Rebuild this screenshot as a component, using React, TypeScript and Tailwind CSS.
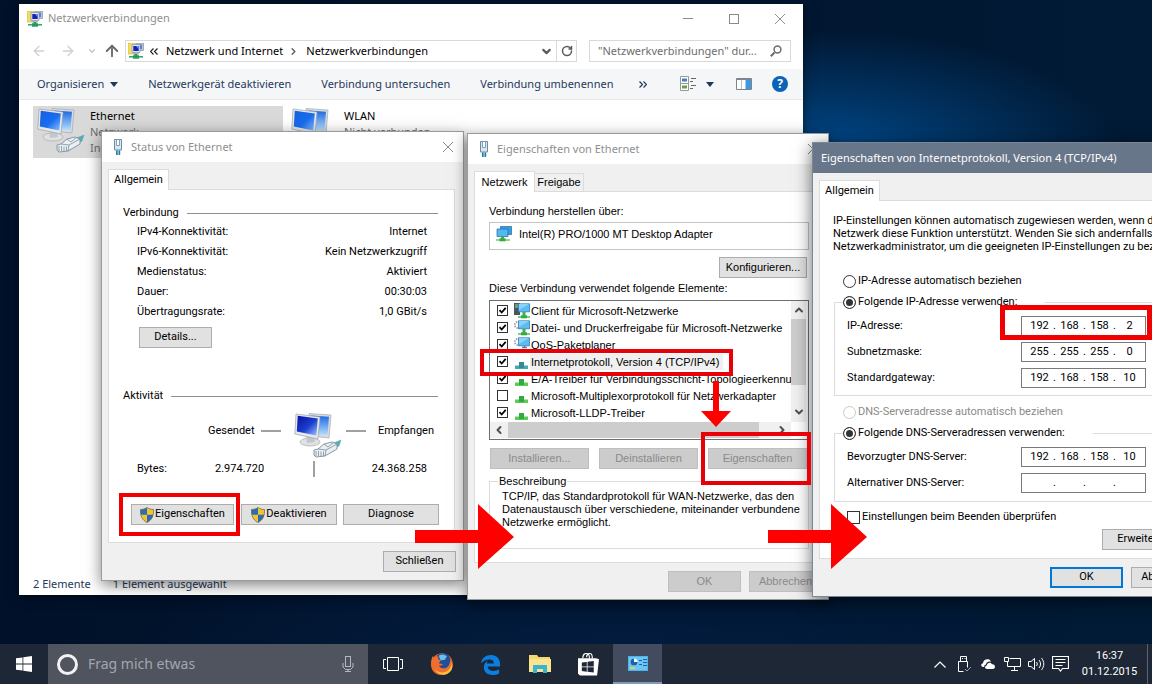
import { FC, ReactNode } from "react"
import { ArrowLeft, ArrowRight, ArrowUp, ChevronDown, ChevronLeft, ChevronRight, ChevronUp, RotateCw } from "lucide-react"

type IconProps = { className?: string }

/* ---------- icons ---------- */

const NetFolderIcon: FC<IconProps> = ({ className }) => (
  <svg viewBox="0 0 16 16" className={className}>
    <path d="M0 0h7v11H0z" fill="#f2dd62" stroke="#c9ae3a" strokeWidth=".6" />
    <path d="M8 0h7.500v7.500H8z" fill="#b9c3d6" stroke="#7c879b" strokeWidth=".6" />
    <path d="M9.500 1.500H14v4.500H9.500z" fill="#5d83d6" />
    <path d="M4 1.500h8v8H4z" fill="#dfe4ee" stroke="#78839a" strokeWidth=".6" />
    <path d="M5.300 3h5.400v5H5.300z" fill="#1322b8" />
    <path d="M8 3h2.700v3.500z" fill="#5f8cf0" />
    <path d="M5 10h6v1.300H5z" fill="#aab3c4" />
    <path d="M6.500 11h3v2h-3z" fill="#2f9e62" />
    <path d="M1 13h14v1.600H1z" fill="#2fae6a" />
    <path d="M5 12.300h6v3.400H5z" fill="#249a5b" />
  </svg>
)

const ComputersIcon: FC<IconProps & { dark?: boolean }> = ({ className, dark }) => (
  <svg viewBox="0 0 48 48" className={className}>
    <defs>
      <linearGradient id={dark ? "scrD" : "scrL"} x1="0" y1="0" x2="1" y2="1">
        <stop offset="0" stopColor={dark ? "#0a12a0" : "#1560dc"} />
        <stop offset=".55" stopColor={dark ? "#1a3fd0" : "#1a6df0"} />
        <stop offset="1" stopColor={dark ? "#a9c6ff" : "#8cc2ff"} />
      </linearGradient>
      <linearGradient id={dark ? "bckD" : "bckL"} x1="0" y1="0" x2="0" y2="1">
        <stop offset="0" stopColor="#1b66e0" />
        <stop offset="1" stopColor="#b4dcff" />
      </linearGradient>
    </defs>
    <path d="M15 .500l22 1.500-2 23-18-2z" fill="#d6dbe0" stroke="#a3a9b0" strokeWidth=".7" />
    <path d="M17 2.500l18 1.300L33.500 22 18 21z" fill={dark ? "url(#bckD)" : "url(#bckL)"} />
    <ellipse cx="16" cy="29" rx="10" ry="4" fill="#dfe1e3" stroke="#a9adb2" strokeWidth=".7" />
    <path d="M12 22l8 1 1 6-8 1z" fill="#c3c7cc" />
    <path d="M2 1l24 3-2 22L.800 21z" fill="#e6e9ec" stroke="#9da3aa" strokeWidth=".7" />
    <path d="M3.800 2.800l20 2.700L22.300 22.500 2.800 18.500z" fill={dark ? "url(#scrD)" : "url(#scrL)"} />
    <path d="M37 31l10-4-2 6-7 4z" fill="#4fb0c2" stroke="#7d949e" strokeWidth=".5" />
    <path d="M20 37l4-1 6-5 8-2 5 2v5L31 43l-9 1-2-2z" fill="#e9eff2" stroke="#7b909b" strokeWidth=".9" />
    <path d="M24 36l8 1 11-6M32 37l-1 6M22 38v5M24.500 38v5M27 38.500V43M29.500 38.500V43M30 31l4 3 5-4" stroke="#7b909b" strokeWidth=".8" fill="none" />
  </svg>
)

const PlugIcon: FC<IconProps> = ({ className }) => (
  <svg viewBox="0 0 10 16" className={className}>
    <path d="M1.500 .500h7v10.500h-7z" fill="#dbe6ef" stroke="#6b8ba6" />
    <path d="M3.500 .500h3v6h-3z" fill="#fff" stroke="#6b8ba6" strokeWidth=".8" />
    <path d="M3 11.500h1.700V16H3zM5.500 11.500h1.700V16H5.500z" fill="#1b7fa8" />
  </svg>
)

const ShieldIcon: FC<IconProps> = ({ className }) => (
  <svg viewBox="0 0 14 16" className={className}>
    <path d="M7 .500c2 1.500 4.300 2 6.500 2 .3 6-1.500 10.500-6.500 13C2 13 .2 8.500 .5 2.500 2.700 2.500 5 2 7 .500z" fill="#f4c430" />
    <path d="M7 .500v7.300H.800C.500 6 .4 4.200 .5 2.500 2.700 2.500 5 2 7 .500zM7 7.800h6.200c-.8 3.500-2.700 6-6.200 7.700z" fill="#2a6cb8" />
    <path d="M7 .500c2 1.500 4.300 2 6.500 2 .3 6-1.500 10.500-6.500 13C2 13 .2 8.500 .5 2.500 2.700 2.500 5 2 7 .500z" fill="none" stroke="#6c6a50" strokeWidth=".8" />
  </svg>
)

const AdapterIcon: FC<IconProps> = ({ className }) => (
  <svg viewBox="0 0 16 16" className={className}>
    <path d="M4.500 .500h11v8h-11z" fill="#3a9de0" stroke="#1c6aa8" strokeWidth=".7" />
    <path d="M1 3h11v7.500H1z" fill="#55b7f0" stroke="#1c6aa8" strokeWidth=".7" />
    <path d="M5 10.500h3v2.500H5z" fill="#3eb34a" />
    <path d="M0 13h14v2H0z" fill="#8fdc8a" />
    <path d="M3.500 12.300h6v3h-6z" fill="#36a844" />
  </svg>
)

const ClientIcon: FC<{ kind: string }> = ({ kind }) => (
  <svg viewBox="0 0 16 16" className="size-4 shrink-0">
    {kind === "client" && <path d="M0 0h6v12H0z" fill="#4b5560" />}
    {kind === "client" && <path d="M1 2h4M1 4h4" stroke="#9fd89f" />}
    {kind !== "client" && (
      <circle cx="4" cy="5" r="3.200" fill="none" stroke="#9aa4ad" strokeWidth="1.800" strokeDasharray="1.500 1" />
    )}
    <path d="M4.500 .800h11v8h-11z" fill="#5cbcf2" stroke="#2b7db8" strokeWidth=".8" />
    <path d="M5 1h10L5 7z" fill="#8ad3fa" />
    {kind !== "qos" ? (
      <>
        <path d="M8.500 9h3v4h-3z" fill="#3eb34a" />
        <path d="M4 13h12v2H4z" fill="#7fd07a" />
        <path d="M7 12.300h6v3H7z" fill="#36a844" />
      </>
    ) : (
      <path d="M8 10.500h5M10.500 9v2" stroke="#5f7c92" strokeWidth="1.500" />
    )}
  </svg>
)

const ProtocolIcon: FC<{ teal?: boolean }> = ({ teal }) => (
  <svg viewBox="0 0 16 16" className="size-4 shrink-0">
    <path d="M1 11.500h13V15H1z" fill={teal ? "#4aa8b0" : "#5fca5c"} />
    <path d="M5 8h5v6H5z" fill={teal ? "#2f8c92" : "#35a840"} />
  </svg>
)

const CloseIcon: FC<IconProps> = ({ className }) => (
  <svg viewBox="0 0 10 10" className={className}>
    <path d="M0 0l10 10M10 0L0 10" stroke="currentColor" fill="none" />
  </svg>
)

const Triangle: FC = () => (
  <svg viewBox="0 0 8 5" className="w-2 h-[5px]">
    <path d="M0 0h8L4 5z" fill="#1e395b" />
  </svg>
)

/* ---------- controls ---------- */

const PushButton: FC<{ children: ReactNode; className?: string; disabled?: boolean }> = ({
  children,
  className = "w-[73px]",
  disabled,
}) => (
  <button
    type="button"
    disabled={disabled}
    className={`h-[21px] shrink-0 flex items-center justify-center border whitespace-nowrap ${
      disabled ? "bg-[#cccccc] border-[#bfbfbf] text-[#8a8a8a]" : "bg-[#e1e1e1] border-[#adadad] text-black"
    } ${className}`}
  >
    {children}
  </button>
)

const TitleBar: FC<{ title: string }> = ({ title }) => (
  <div className="h-[30px] shrink-0 bg-white flex items-center pl-[11px] text-[11px] text-[#8f8f8f] font-['Noto_Sans',sans-serif]">
    <PlugIcon className="w-[10px] h-4" />
    <h2 className="ml-2">{title}</h2>
    <button type="button" aria-label="Schließen" className="ml-auto pr-[10px] text-[#8a8a8a]">
      <CloseIcon className="size-[10px]" />
    </button>
  </div>
)

const SectionTitle: FC<{ children: string }> = ({ children }) => (
  <div className="h-4 flex items-center gap-2">
    <h3>{children}</h3>
    <span className="flex-1 h-px bg-[#8f8f8f]" />
  </div>
)

/* ---------- explorer window ---------- */

const ExplorerWindow: FC = () => (
  <section className="absolute left-[19px] top-1 w-[784px] h-[591px] flex flex-col bg-white text-[11px] font-['Noto_Sans',sans-serif] shadow-[0_2px_10px_rgba(0,0,0,0.5)]">
    <div className="h-[29px] flex items-center pl-2 text-[#8f8f8f]">
      <NetFolderIcon className="size-4" />
      <h1 className="ml-[5px]">Netzwerkverbindungen</h1>
      <div className="ml-auto flex self-stretch">
        <button type="button" aria-label="Minimieren" className="w-[46px] flex items-center justify-center">
          <span className="w-[10px] h-px bg-[#8a8a8a]" />
        </button>
        <button type="button" aria-label="Maximieren" className="w-[46px] flex items-center justify-center">
          <span className="size-[10px] border border-[#8a8a8a]" />
        </button>
        <button type="button" aria-label="Schließen" className="w-[46px] flex items-center justify-center">
          <CloseIcon className="size-[10px]" />
        </button>
      </div>
    </div>

    <div className="h-9 flex items-center pl-[5px] pr-3 text-black">
      <button type="button" aria-label="Zurück" className="w-[29px] flex justify-center text-[#d0d0d0]">
        <ArrowLeft className="size-4" strokeWidth={2} />
      </button>
      <button type="button" aria-label="Vorwärts" className="w-[29px] flex justify-center text-[#d0d0d0]">
        <ArrowRight className="size-4" strokeWidth={2} />
      </button>
      <button type="button" aria-label="Verlauf" className="w-5 flex justify-center text-[#c4c4c4]">
        <ChevronDown className="size-[10px]" strokeWidth={3} />
      </button>
      <button type="button" aria-label="Nach oben" className="w-5 flex justify-center text-[#6a6a6a]">
        <ArrowUp className="size-[18px]" strokeWidth={2.5} />
      </button>
      <nav className="ml-[3px] flex-1 h-[22px] flex items-center border border-[#d9d9d9]">
        <NetFolderIcon className="ml-[2px] size-4" />
        <svg viewBox="0 0 8 7" className="ml-[6px] mr-2 w-2 h-[7px]">
          <path d="M3.500 .500l-3 3 3 3M7.500 .500l-3 3 3 3" fill="none" stroke="#222" strokeWidth="1.200" />
        </svg>
        <button type="button">Netzwerk und Internet</button>
        <ChevronRight className="ml-[5px] mr-[7px] size-[11px] text-[#5c5c5c]" strokeWidth={3} />
        <button type="button">Netzwerkverbindungen</button>
        <ChevronDown className="ml-auto mr-[3px] size-[13px] text-[#5c5c5c]" strokeWidth={4} />
        <button
          type="button"
          aria-label="Aktualisieren"
          className="w-5 self-stretch flex items-center justify-center border-l border-[#d9d9d9] text-[#5c5c5c]"
        >
          <RotateCw className="size-3" strokeWidth={3} />
        </button>
      </nav>
      <div className="ml-3 w-[202px] h-[22px] flex items-center border border-[#d9d9d9]">
        <input
          aria-label="Suchen"
          placeholder={'"Netzwerkverbindungen" dur...'}
          className="flex-1 min-w-0 pl-2 outline-none placeholder:text-[#6d6d6d]"
        />
        <svg viewBox="0 0 12 12" className="mr-2 size-3">
          <path d="M4.500 7.500L.800 11.200" stroke="#6d6d6d" strokeWidth="2" />
          <circle cx="7.500" cy="4.500" r="3.400" fill="none" stroke="#6d6d6d" strokeWidth="1.500" />
        </svg>
      </div>
    </div>

    <div className="h-[31px] flex items-center gap-[30px] pl-[18px] pr-[15px] bg-[#f5f6f7] border-b border-[#e4e6e8] text-[#1e395b]">
      <button type="button" className="flex items-center gap-[6px]">
        Organisieren
        <Triangle />
      </button>
      <button type="button">Netzwerkgerät deaktivieren</button>
      <button type="button">Verbindung untersuchen</button>
      <button type="button">Verbindung umbenennen</button>
      <button type="button" aria-label="Weitere Befehle" className="-ml-1">
        <svg viewBox="0 0 8 7" className="w-2 h-[7px]">
          <path d="M.500 .500l3 3-3 3M4.500 .500l3 3-3 3" fill="none" stroke="#1e395b" strokeWidth="1.200" />
        </svg>
      </button>
      <div className="ml-auto flex items-center">
        <button type="button" aria-label="Ansicht ändern" className="flex items-center gap-[10px]">
          <svg viewBox="0 0 16 16" className="size-4">
            <path d="M.500 .500h8v7h-8zM.500 7.500h8v7h-8z" fill="#fff" stroke="#9a9a8a" />
            <path d="M2 2.500h5v3H2z" fill="#3f7fc8" />
            <path d="M2 9.500h5v3H2z" fill="#6f9a50" />
            <path d="M11 2.500h5M10 5.500h3M11 9.500h5M10 12.500h3" stroke="#666" />
          </svg>
          <Triangle />
        </button>
        <button type="button" aria-label="Vorschau" className="ml-[22px]">
          <svg viewBox="0 0 16 12" className="w-4 h-3">
            <path d="M.500 .500h15v11H.500z" fill="#fff" stroke="#7a8590" />
            <path d="M1 1.500h14" stroke="#7a8590" />
            <path d="M9.500 2H15v9H9.500z" fill="#3f97dc" />
            <path d="M5.500 2v9" stroke="#b9c0c6" />
          </svg>
        </button>
        <button
          type="button"
          aria-label="Hilfe"
          className="ml-5 size-4 rounded-full bg-[#0a63b8] text-white text-xs font-bold leading-4 text-center"
        >
          ?
        </button>
      </div>
    </div>

    <ul className="flex-1 flex gap-1 pl-[14px] pt-[6px] leading-4">
      <li className="w-[250px] h-[52px] flex pl-1 pt-[2px] bg-[#d9d9d9]">
        <ComputersIcon className="size-12" />
        <div className="ml-[5px]">
          <p className="text-black">Ethernet</p>
          <p className="text-[#6d6d6d]">Netzwerk</p>
          <p className="text-[#6d6d6d]">Intel(R)</p>
        </div>
      </li>
      <li className="w-[250px] h-[52px] flex pl-1 pt-[2px]">
        <ComputersIcon className="size-12" />
        <div className="ml-[5px]">
          <p className="text-black">WLAN</p>
          <p className="text-[#6d6d6d]">Nicht verbunden</p>
        </div>
      </li>
    </ul>

    <footer className="h-[22px] flex items-center gap-[22px] pl-[14px] text-[#1e395b]">
      <span>2 Elemente</span>
      <span>1 Element ausgewählt</span>
    </footer>
  </section>
)

/* ---------- status dialog ---------- */

const connection = [
  ["IPv4-Konnektivität:", "Internet"],
  ["IPv6-Konnektivität:", "Kein Netzwerkzugriff"],
  ["Medienstatus:", "Aktiviert"],
  ["Dauer:", "00:30:03"],
  ["Übertragungsrate:", "1,0 GBit/s"],
]

const StatusDialog: FC = () => (
  <section className="absolute left-[101px] top-[131px] w-[363px] h-[450px] flex flex-col border border-[#9b9b9b] bg-[#f0f0f0] text-[11px] text-black font-[Roboto,sans-serif] shadow-[0_4px_14px_rgba(0,0,0,0.5)]">
    <TitleBar title="Status von Ethernet" />
    <div role="tablist" className="pl-[6px] pt-[7px] flex">
      <button
        type="button"
        role="tab"
        className="relative -mb-px h-[21px] w-[61px] bg-white border border-b-0 border-[#dcdcdc]"
      >
        Allgemein
      </button>
    </div>
    <div className="ml-[6px] mr-2 h-[354px] flex flex-col bg-white border border-[#dcdcdc] pl-[14px] pr-4 pt-[15px]">
      <SectionTitle>Verbindung</SectionTitle>
      <dl className="pl-[14px] pr-[11px] mt-px">
        {connection.map(([name, value]) => (
          <div key={name} className="h-5 flex items-center justify-between">
            <dt>{name}</dt>
            <dd>{value}</dd>
          </div>
        ))}
      </dl>
      <PushButton className="w-[73px] ml-4 mt-[5px]">Details...</PushButton>

      <div className="mt-10">
        <SectionTitle>Aktivität</SectionTitle>
      </div>
      <div className="mt-[9px] pl-[85px] pr-1 h-12 flex items-start">
        <span className="w-[53px] h-9 leading-9">Gesendet</span>
        <span className="mt-[17px] w-5 h-[2px] bg-[#a0a0a0]" />
        <ComputersIcon className="ml-[13px] size-12" dark />
        <span className="mt-[17px] ml-1 w-5 h-[2px] bg-[#a0a0a0]" />
        <span className="ml-auto h-9 leading-9">Empfangen</span>
      </div>
      <div className="pl-[14px] pr-[11px] h-4 flex items-center">
        <span className="w-[78px]">Bytes:</span>
        <span className="w-[98px]">2.974.720</span>
        <span className="w-[2px] h-4 bg-[#a0a0a0]" />
        <span className="ml-auto">24.368.258</span>
      </div>
      <div className="mt-[27px] ml-2 flex">
        <PushButton className="w-[103px]">
          <ShieldIcon className="w-[14px] h-4 mr-px" />
          Eigenschaften
        </PushButton>
        <PushButton className="w-24 ml-[7px]">
          <ShieldIcon className="w-[14px] h-4 mr-px" />
          Deaktivieren
        </PushButton>
        <PushButton className="w-24 ml-[6px]">Diagnose</PushButton>
      </div>
    </div>
    <div className="mt-2 mr-[7px] flex justify-end">
      <PushButton>Schließen</PushButton>
    </div>
  </section>
)

/* ---------- adapter properties dialog ---------- */

const items = [
  { label: "Client für Microsoft-Netzwerke", kind: "client", checked: true },
  { label: "Datei- und Druckerfreigabe für Microsoft-Netzwerke", kind: "share", checked: true },
  { label: "QoS-Paketplaner", kind: "qos", checked: true },
  { label: "Internetprotokoll, Version 4 (TCP/IPv4)", kind: "protocol", checked: true, selected: true },
  { label: "E/A-Treiber für Verbindungsschicht-Topologieerkennung", kind: "protocol", checked: true },
  { label: "Microsoft-Multiplexorprotokoll für Netzwerkadapter", kind: "protocol", checked: false },
  { label: "Microsoft-LLDP-Treiber", kind: "protocol", checked: true },
]

const CheckBox: FC<{ checked: boolean }> = ({ checked }) => (
  <span className="grid size-[11px] shrink-0">
    <input
      type="checkbox"
      defaultChecked={checked}
      className="col-start-1 row-start-1 size-[11px] appearance-none border border-[#333] bg-white"
    />
    {checked && (
      <svg viewBox="0 0 11 11" className="col-start-1 row-start-1 size-[11px] pointer-events-none">
        <path d="M2.500 5.200l2.200 2.300 4-4.700" fill="none" stroke="#000" strokeWidth="1.800" />
      </svg>
    )}
  </span>
)

const AdapterDialog: FC = () => (
  <section className="absolute left-[467px] top-[133px] w-[362px] h-[467px] flex flex-col border border-[#9b9b9b] bg-[#f0f0f0] text-[11px] text-black font-['Liberation_Sans',sans-serif] shadow-[0_4px_14px_rgba(0,0,0,0.5)]">
    <TitleBar title="Eigenschaften von Ethernet" />
    <div role="tablist" className="pl-[6px] pt-[7px] flex items-end">
      <button
        type="button"
        role="tab"
        className="relative -mb-px h-[21px] w-[61px] bg-white border border-b-0 border-[#dcdcdc]"
      >
        Netzwerk
      </button>
      <button type="button" role="tab" className="h-[18px] w-[49px] border border-l-0 border-b-0 border-[#dcdcdc]">
        Freigabe
      </button>
    </div>
    <div className="mx-[6px] h-[372px] flex flex-col bg-white border border-[#dcdcdc] px-[14px] pt-[11px]">
      <p className="h-4 leading-4">Verbindung herstellen über:</p>
      <div className="mt-[3px] h-7 w-[320px] flex items-start pt-[3px] pl-[6px] border border-[#c4c4c4]">
        <AdapterIcon className="size-4" />
        <span className="ml-[7px] leading-4">Intel(R) PRO/1000 MT Desktop Adapter</span>
      </div>
      <div className="mt-[7px] w-[318px] flex justify-end">
        <PushButton className="w-[88px]">Konfigurieren...</PushButton>
      </div>
      <p className="mt-[2px] h-4 leading-4">Diese Verbindung verwendet folgende Elemente:</p>

      <div className="mt-1 h-[140px] w-[320px] flex flex-col border border-[#6f6f6f] pr-[2px]">
        <div className="flex h-[121px]">
          <ul className="flex-1 min-w-0 overflow-hidden pt-px pl-[7px]">
            {items.map(item => (
              <li key={item.label}>
                <label className="h-[17px] flex items-center whitespace-nowrap">
                  <CheckBox checked={item.checked} />
                  <span className="ml-[6px]">
                    {item.kind === "protocol" ? <ProtocolIcon teal={item.selected} /> : <ClientIcon kind={item.kind} />}
                  </span>
                  <span className={item.selected ? "leading-4 pl-px pr-1 bg-[#f0f0f0]" : "leading-4 pl-px"}>
                    {item.label}
                  </span>
                </label>
              </li>
            ))}
          </ul>
          <div className="w-[15px] flex flex-col items-center bg-[#f0f0f0] text-[#505050]">
            <ChevronUp className="my-[3px] size-3" strokeWidth={4} />
            <span className="w-full h-[66px] bg-[#cdcdcd]" />
            <ChevronDown className="mt-auto mb-1 size-3" strokeWidth={4} />
          </div>
        </div>
        <div className="h-4 mr-[15px] flex items-center bg-[#f0f0f0] text-[#505050]">
          <ChevronLeft className="mx-[3px] size-3 shrink-0" strokeWidth={4} />
          <span className="w-[251px] h-full bg-[#cdcdcd]" />
          <ChevronRight className="ml-auto mr-[3px] size-3 shrink-0" strokeWidth={4} />
        </div>
      </div>

      <div className="mt-2 ml-px flex gap-[10px]">
        <PushButton disabled className="w-[99px]">Installieren...</PushButton>
        <PushButton disabled className="w-[99px]">Deinstallieren</PushButton>
        <PushButton disabled className="w-[99px]">Eigenschaften</PushButton>
      </div>

      <fieldset className="mt-1 h-[76px] w-[320px] border border-[#dcdcdc] pl-3">
        <legend className="-ml-1 px-px leading-4">Beschreibung</legend>
        <p className="pt-px w-[302px] leading-[13px]">
          TCP/IP, das Standardprotokoll für WAN-Netzwerke, das den Datenaustausch über verschiedene, miteinander
          verbundene Netzwerke ermöglicht.
        </p>
      </fieldset>
    </div>
    <div className="mt-2 mr-[6px] flex justify-end gap-2">
      <PushButton disabled>OK</PushButton>
      <PushButton disabled>Abbrechen</PushButton>
    </div>
  </section>
)

/* ---------- IPv4 properties dialog ---------- */

const IpField: FC<{ label: string; octets: string[] }> = ({ label, octets }) => (
  <div role="group" aria-label={label} className="h-[26px] flex items-center">
    <span className="w-[174px]">{label}</span>
    <div className="w-[125px] h-5 flex items-center pl-1 border border-[#7a7a7a] bg-white">
      {octets.map((octet, i) => (
        <span key={i} className="flex items-center">
          {i > 0 && <span className="w-[3px] text-center">.</span>}
          <input
            aria-label={`${label} ${i + 1}`}
            defaultValue={octet}
            className="w-[27px] text-center outline-none"
          />
        </span>
      ))}
    </div>
  </div>
)

const Radio: FC<{ name: string; label: string; checked?: boolean; disabled?: boolean }> = ({
  name,
  label,
  checked,
  disabled,
}) => (
  <label
    className={`h-[21px] pr-7 flex items-center gap-[2px] whitespace-nowrap ${disabled ? "text-[#8a8a8a]" : "text-black"}`}
  >
    <input
      type="radio"
      name={name}
      defaultChecked={checked}
      disabled={disabled}
      className="size-[13px] shrink-0 appearance-none rounded-full border border-[#333] bg-white checked:bg-[#333] checked:shadow-[inset_0_0_0_2px_white] disabled:border-[#c8c8c8]"
    />
    {label}
  </label>
)

const Ipv4Dialog: FC = () => (
  <section className="absolute left-[812px] top-[142px] w-[399px] h-[455px] flex flex-col border border-[#7b8796] bg-[#f0f0f0] text-[11px] text-black font-[Roboto,sans-serif] shadow-[0_4px_16px_rgba(0,0,0,0.6)]">
    <div className="h-[30px] shrink-0 flex items-center pl-2 bg-[#68768a] text-white font-['Noto_Sans',sans-serif]">
      <h2>Eigenschaften von Internetprotokoll, Version 4 (TCP/IPv4)</h2>
    </div>
    <div role="tablist" className="pl-[6px] pt-[7px] flex">
      <button
        type="button"
        role="tab"
        className="relative -mb-px h-[21px] w-[61px] bg-white border border-b-0 border-[#dcdcdc]"
      >
        Allgemein
      </button>
    </div>
    <div className="mx-[6px] h-[359px] flex flex-col bg-white border border-[#dcdcdc] pl-[13px] pr-[15px] pt-[13px]">
      <p className="leading-[13px] whitespace-nowrap">
        IP-Einstellungen können automatisch zugewiesen werden, wenn das
        <br />
        Netzwerk diese Funktion unterstützt. Wenden Sie sich andernfalls an den
        <br />
        Netzwerkadministrator, um die geeigneten IP-Einstellungen zu beziehen.
      </p>

      <div className="mt-[18px] pl-[10px]">
        <Radio name="ip" label="IP-Adresse automatisch beziehen" />
      </div>
      <fieldset className="ml-px w-[356px] h-[104px] border border-[#dcdcdc] pl-3">
        <legend className="-ml-1 bg-white">
          <Radio name="ip" label="Folgende IP-Adresse verwenden:" checked />
        </legend>
        <IpField label="IP-Adresse:" octets={["192", "168", "158", "2"]} />
        <IpField label="Subnetzmaske:" octets={["255", "255", "255", "0"]} />
        <IpField label="Standardgateway:" octets={["192", "168", "158", "10"]} />
      </fieldset>

      <div className="mt-[6px] pl-[10px]">
        <Radio name="dns" label="DNS-Serveradresse automatisch beziehen" disabled />
      </div>
      <fieldset className="ml-px w-[356px] h-[79px] border border-[#dcdcdc] pl-3">
        <legend className="-ml-1 bg-white">
          <Radio name="dns" label="Folgende DNS-Serveradressen verwenden:" checked />
        </legend>
        <IpField label="Bevorzugter DNS-Server:" octets={["192", "168", "158", "10"]} />
        <IpField label="Alternativer DNS-Server:" octets={["", "", "", ""]} />
      </fieldset>

      <label className="mt-[7px] ml-[14px] h-4 flex items-center gap-[2px]">
        <input type="checkbox" className="size-[13px] appearance-none border border-[#333] bg-white" />
        Einstellungen beim Beenden überprüfen
      </label>
      <div className="mt-1 mr-[3px] flex justify-end">
        <PushButton className="w-[83px]">Erweitert...</PushButton>
      </div>
    </div>
    <div className="mt-2 mr-[6px] flex justify-end gap-2">
      <button type="button" className="w-[73px] h-[21px] border-2 border-[#0078d7] bg-[#e1e1e1]">
        OK
      </button>
      <PushButton>Abbrechen</PushButton>
    </div>
  </section>
)

/* ---------- red markers ---------- */

const Markers: FC = () => (
  <div className="absolute inset-0 pointer-events-none">
    <div className="absolute left-[119px] top-[493px] w-[121px] h-[43px] border-4 border-[#f00000]" />
    <div className="absolute left-[480px] top-[349px] w-[253px] h-[27px] border-4 border-[#e80008]" />
    <div className="absolute left-[701px] top-[432px] w-[110px] h-[53px] border-4 border-[#e80008]" />
    <div className="absolute left-[1000px] top-[305px] w-[152px] h-[35px] border-[5px] border-[#f00000]" />
    <svg viewBox="0 0 99 66" className="absolute left-[415px] top-[504px] w-[99px] h-[66px]">
      <path d="M0 26h63V0l36 33-36 32V39H0z" fill="#ff0000" />
    </svg>
    <svg viewBox="0 0 99 66" className="absolute left-[768px] top-[504px] w-[99px] h-[66px]">
      <path d="M0 26h63V0l36 33-36 32V39H0z" fill="#ff0000" />
    </svg>
    <svg viewBox="0 0 30 46" className="absolute left-[701px] top-[381px] w-[30px] h-[46px]">
      <path d="M12 0h6v30h12L15 46 0 30h12z" fill="#ff0000" />
    </svg>
  </div>
)

/* ---------- taskbar ---------- */

const TaskButton: FC<{ label: string; children: ReactNode; active?: boolean }> = ({ label, children, active }) => (
  <button
    type="button"
    aria-label={label}
    className={`w-[49px] flex items-center justify-center ${active ? "bg-[#434c5e] border-b-2 border-[#8299b8]" : ""}`}
  >
    {children}
  </button>
)

const Taskbar: FC = () => (
  <footer className="h-10 shrink-0 flex bg-[#1e2736] text-white font-['Noto_Sans',sans-serif]">
    <button type="button" aria-label="Start" className="w-12 flex items-center justify-center">
      <svg viewBox="0 0 16 16" className="size-4">
        <path d="M0 2.300l6.500-.9v6.200H0zM7.300 1.300L16 0v7.600H7.300zM0 8.400h6.500v6.200L0 13.700zM7.300 8.400H16V16l-8.700-1.300z" fill="#fff" />
      </svg>
    </button>
    <label className="w-80 flex items-center bg-[#50545e] pl-[9px] pr-[14px]">
      <span className="size-[21px] rounded-full border-[3px] border-[#f2f2f2]" />
      <input
        aria-label="Cortana"
        placeholder="Frag mich etwas"
        className="ml-[10px] flex-1 min-w-0 text-sm outline-none placeholder:text-[#a2a6ae]"
      />
      <svg viewBox="0 0 12 16" className="w-3 h-4" fill="none" stroke="#b4b8be">
        <rect x="3.500" y=".500" width="5" height="10" />
        <path d="M1 7v4l2.500 2.500h5L11 11V7M6 13v2.500M3 15.500h6" />
      </svg>
    </label>
    <TaskButton label="Taskansicht">
      <svg viewBox="0 0 20 14" className="w-5 h-[14px]" fill="none" stroke="#fff">
        <path d="M4.500 .500h11v13h-11zM3 2.500H.500v9H3M17 2.500h2.500v9H17" />
      </svg>
    </TaskButton>
    <TaskButton label="Firefox">
      <svg viewBox="0 0 22 22" className="size-[22px]">
        <circle cx="11" cy="11" r="10.800" fill="#e8622a" />
        <path d="M6 2.500C9 0 14 0 17 2c2.500 2 3 6 2 9-1.500 4-6 5.500-9 4-2.500-1.500-3-4-1.500-5.500C7 8 5.500 5 6 2.500z" fill="#1f4f96" />
        <path d="M8 2.500c3-1.800 6-1 8 1-1 .500-1 2-2 3s-2.500 0-3.500 1C9 7 8 4.500 8 2.500z" fill="#6cc0e8" />
        <path d="M1.500 3c.500 1 1 1.500 2 2 1-1 2.500-1.500 4-1.500-.800 1.500-.500 2.500.500 3.200.800.300 1.800.300 1.800 1C9.500 8.500 8 9 7.800 10.300c1.200.8 2.500.200 4.200.700-1 2-3 1.500-4 1.500.5 2.500 4 4 7 2.500 3-1.500 4.500-5 4-8.500 3 5 1.500 12-4 14.500C9 23.500 2 21 .500 14.500-.500 10.500.500 6 1.500 3z" fill="#ee6f2d" />
        <path d="M4 16c3 4 10 5 14 .500 2-2.300 3-5 2.500-8 2.200 5 .5 10-4 12.300C11.500 23 6 21 4 16z" fill="#f9c13c" />
      </svg>
    </TaskButton>
    <TaskButton label="Edge">
      <svg viewBox="0 0 22 22" className="size-[21px]">
        <path
          d="M1 10C2 4 6 1 11.500 1 17.500 1 21 5 21 10.500V13H8c.2 3 2.600 4.700 6 4.700 2.300 0 4.300-.700 6-1.700v4.300c-2 1.100-4.300 1.700-7 1.700-5.600 0-9-3.300-9-8 0-3.300 1.800-5.700 4.500-7.200-1 1-1.500 2.200-1.600 3.200h7.600c0-2.700-1.500-4.200-4.500-4.200C6.500 5.800 3 7.500 1 10z"
          fill="#0b7fe0"
        />
      </svg>
    </TaskButton>
    <TaskButton label="Explorer">
      <svg viewBox="0 0 22 18" className="w-[22px] h-[18px]">
        <path d="M0 0h8l1.500 2H21v15H0z" fill="#f5d76e" />
        <path d="M0 4h22v13H0z" fill="#fbe48f" />
        <path d="M4 10h14v8h-4v-4H8v4H4z" fill="#38b3d6" />
      </svg>
    </TaskButton>
    <TaskButton label="Store">
      <svg viewBox="0 0 22 24" className="w-[21px] h-6">
        <path d="M0 6h19l3 1-2 17H2L0 22z" fill="#fff" />
        <path d="M5 6c0-3 1.500-5 3.500-5S12 3 12 6M9 5c0-2.500 1.500-4 3.300-4S15 3 15 6" fill="none" stroke="#fff" strokeWidth="1.200" />
        <path d="M4 10.500l5.200-.700v4.700H4zM10 9.700l6.500-.9v5.700H10zM4 15.300h5.200V20L4 19.300zM10 15.300h6.500V21l-6.500-.9z" fill="#1e2736" />
      </svg>
    </TaskButton>
    <TaskButton label="Systemsteuerung" active>
      <svg viewBox="0 0 20 15" className="w-5 h-[15px]">
        <path d="M0 0h20v15H0z" fill="#4db4ea" />
        <path d="M1 1h18v13H1z" fill="#6cc6f3" />
        <circle cx="6" cy="6" r="3.600" fill="#fff" />
        <path d="M6 6V2.400A3.600 3.600 0 1 0 9.600 6z" fill="#1c62a8" />
        <path d="M11 4.500h3M11 8.500h3M15 3.500h4M15 6.500h4M15 9.500h4" stroke="#1c62a8" />
        <path d="M2 12h5" stroke="#f0d24a" strokeWidth="1.500" />
      </svg>
    </TaskButton>

    <div className="ml-auto flex items-center">
      <button type="button" aria-label="Ausgeblendete Symbole" className="w-6 flex justify-center">
        <svg viewBox="0 0 12 7" className="w-3 h-[7px]">
          <path d="M.500 6.500L6 1l5.500 5.500" fill="none" stroke="#fff" strokeWidth="1.200" />
        </svg>
      </button>
      <button type="button" aria-label="USB" className="w-6 flex justify-center">
        <svg viewBox="0 0 13 16" className="w-[13px] h-4" fill="none" stroke="#fff">
          <path d="M2.500 .500h6v5h-6zM.500 15.500v-10h9v6M.500 15.500h5M4 2.500h1M6.500 2.500h1" />
          <path d="M7 13l2 2 4-4" stroke="#9aa3ad" />
        </svg>
      </button>
      <button type="button" aria-label="OneDrive" className="w-6 flex justify-center">
        <svg viewBox="0 0 14 10" className="w-[14px] h-[10px]">
          <path d="M2 8C-.500 7.500-.300 4.500 2 4.200 2.200 1.500 4.500 0 7 .300c1.600.2 2.500 1 3 2.200C6.500 2 5 4 5 5.500 3 6 3 7.500 3.500 8z" fill="#fff" />
          <path d="M6 10c-2.500 0-2.500-3.200-.300-3.500C6 3.500 10 2.500 11 5.300c3.500-.3 4 4.200 1 4.700z" fill="#fff" />
        </svg>
      </button>
      <button type="button" aria-label="Netzwerk" className="w-6 flex justify-center">
        <svg viewBox="0 0 17 14" className="w-[17px] h-[14px]" fill="none" stroke="#fff">
          <path d="M5.500 1.500h11v8H3.500V5M.500 .500h4v4h-4zM10.500 9.500v4M7 13.500h7" />
        </svg>
      </button>
      <button type="button" aria-label="Lautstärke" className="w-6 flex justify-center">
        <svg viewBox="0 0 17 14" className="w-[17px] h-[14px]" fill="none" stroke="#fff">
          <path d="M.500 4.500h2.500L6.500 1.500v11L3 9.500H.500zM8.500 5c1 1.300 1 2.700 0 4M11 3c2 2.500 2 5.500 0 8M13.500 1c3 4 3 8 0 12" />
        </svg>
      </button>
      <button type="button" aria-label="Info-Center" className="w-6 flex justify-center">
        <svg viewBox="0 0 17 16" className="w-[17px] h-4" fill="none" stroke="#fff">
          <path d="M.500 .500h16v12H10.500L8.500 15l-2-2.500h-6zM3.500 3.500h10M3.500 6.500h10M3.500 9.500h7" strokeWidth="1.200" />
        </svg>
      </button>
      <div className="w-[75px] text-center text-[11px] leading-4 font-[Roboto,sans-serif]">
        <p>16:37</p>
        <p>01.12.2015</p>
      </div>
      <span className="w-[5px] self-stretch border-l border-[#5b6370]" />
    </div>
  </footer>
)

export default function App() {
  return (
    <div className="relative h-screen overflow-hidden flex flex-col bg-[#02122b]">
      <main className="relative flex-1 overflow-hidden bg-[radial-gradient(300px_120px_at_820px_150px,#00498a,transparent),radial-gradient(500px_160px_at_600px_690px,#031f44,transparent),linear-gradient(to_right,#01112a,#01152f_60%,#011b36)]">
        <ExplorerWindow />
        <StatusDialog />
        <AdapterDialog />
        <Ipv4Dialog />
        <Markers />
      </main>
      <Taskbar />
    </div>
  )
}
